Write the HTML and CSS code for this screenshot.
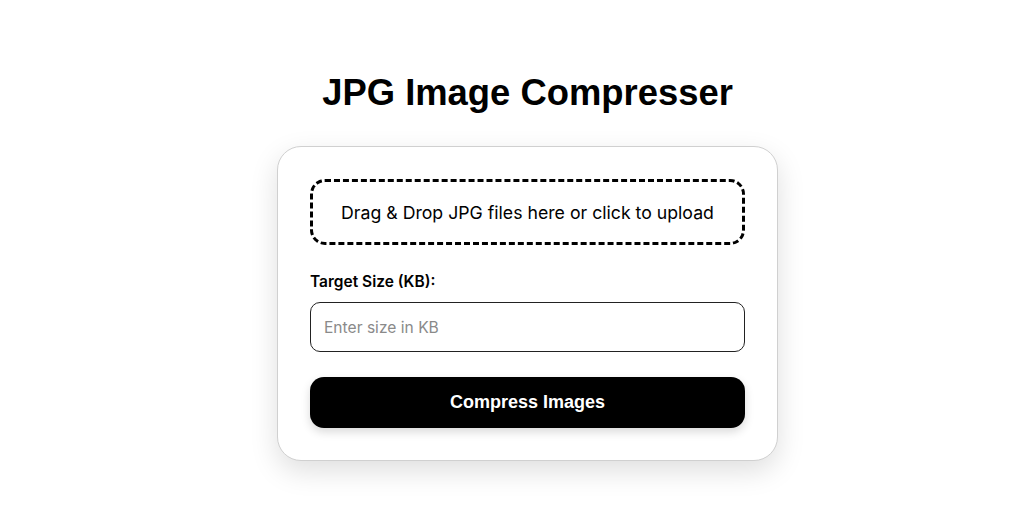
FILE: index.html
```html
<!DOCTYPE html>
<html lang="en">
<head>
<meta charset="UTF-8">
<title>JPG Image Compresser</title>
<link rel="stylesheet" href="styles.css">
</head>
<body>
<main class="page">
  <h1 class="title">JPG Image Compresser</h1>
  <section class="card">
    <div class="dropzone">Drag &amp; Drop JPG files here or click to upload</div>
    <label class="label" for="size">Target Size (KB):</label>
    <input class="input" id="size" type="text" placeholder="Enter size in KB">
    <button class="btn">Compress Images</button>
  </section>
</main>
</body>
</html>
```
FILE: styles.css
```css
* { box-sizing: border-box; }
html, body { margin: 0; background: #fff; }
body {
  font-family: "Inter", "Liberation Sans", sans-serif;
  color: #000;
}
.page {
  display: flex;
  flex-direction: column;
  align-items: center;
  padding: 70px 0 40px 23px;
}
.title {
  font-family: "Liberation Sans", Arial, sans-serif;
  font-weight: 700;
  font-size: 36.4px;
  line-height: 46px;
  margin: 0 0 30px;
}
.card {
  width: 501px;
  border: 1px solid #d0d0d0;
  border-radius: 24px;
  padding: 32px;
  display: flex;
  flex-direction: column;
  box-shadow: 0 10px 28px rgba(0,0,0,0.13);
  background: #fff;
}
.dropzone {
  height: 66px;
  border: 3px dashed #000;
  border-radius: 15px;
  display: flex;
  align-items: center;
  justify-content: center;
  font-size: 17.7px;
  margin-bottom: 28px;
}
.label {
  font-weight: 600;
  font-size: 15.5px;
  line-height: 18px;
  margin-bottom: 11px;
}
.input {
  height: 50px;
  border: 1px solid #222;
  border-radius: 10px;
  padding: 0 13px;
  font-family: inherit;
  font-size: 15.6px;
  margin-bottom: 25px;
  outline: none;
}
.input::placeholder { color: #8a8a8a; }
.btn {
  height: 51px;
  border: none;
  border-radius: 14px;
  background: #000;
  color: #fff;
  font-family: "Liberation Sans", Arial, sans-serif;
  font-weight: 700;
  font-size: 18px;
  box-shadow: 0 4px 10px rgba(0,0,0,0.15);
  cursor: pointer;
}
```
